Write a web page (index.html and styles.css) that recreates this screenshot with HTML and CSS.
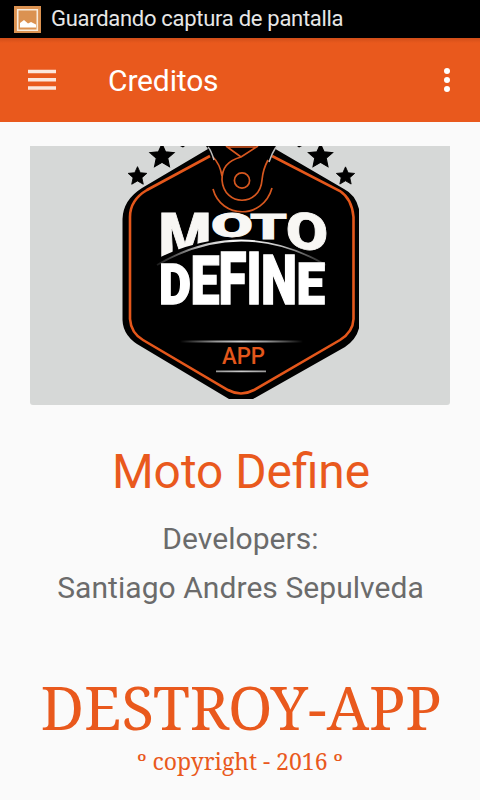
FILE: index.html
```html
<!DOCTYPE html>
<html lang="es">
<head>
<meta charset="utf-8">
<title>Creditos</title>
<link rel="stylesheet" href="styles.css">
</head>
<body>
<div class="status">
  <svg class="shot" width="27" height="27" viewBox="0 0 27 27"><path fill="#db9251" d="M0 0h27v27H0z"/><path fill="none" stroke="#f8ebdc" stroke-width="1.6" d="M3.700 3.700h19.600v20.500H3.700z"/><path fill="#fff" d="M6 21.500v-4.500l4-3 4 3.500 3-1.500 5 2.500v3z"/></svg>
  <span class="status-text">Guardando captura de pantalla</span>
</div>
<header class="bar">
  <svg class="menu" width="28" height="22" viewBox="0 0 28 22"><path stroke="#fff" stroke-opacity=".85" stroke-width="3.400" d="M0 2.500h28M0 10.700h28M0 19h28"/></svg>
  <h1 class="title">Creditos</h1>
  <svg class="more" width="6" height="24" viewBox="0 0 6 24" fill="#fff"><circle cx="3" cy="3" r="3"/><circle cx="3" cy="12" r="3"/><circle cx="3" cy="21" r="3"/></svg>
</header>
<main class="content">
  <svg class="logo" width="420" height="259" viewBox="30 146 420 259">
    <defs>
      <path id="star" d="M0-11 3.200-3.900 11-3.100 5.200 2 6.800 9.700 0 5.800-6.800 9.700-5.200 2-11-3.100-3.200-3.900z"/>
      <clipPath id="crop"><path d="M30 146h329v253H30z"/></clipPath>
      <linearGradient id="fade"><stop offset="0" stop-color="#aaa" stop-opacity="0"/><stop offset=".3" stop-color="#999"/><stop offset=".5" stop-color="#ccc"/><stop offset=".7" stop-color="#999"/><stop offset="1" stop-color="#aaa" stop-opacity="0"/></linearGradient>
      <linearGradient id="arc"><stop offset="0" stop-color="#888" stop-opacity=".2"/><stop offset=".25" stop-color="#bbb"/><stop offset=".5" stop-color="#fff"/><stop offset=".75" stop-color="#bbb"/><stop offset="1" stop-color="#888" stop-opacity=".2"/></linearGradient>
    </defs>
    <g clip-path="url(#crop)">
      <path d="M213 146 142 188Q123 200 122.500 219V320Q123 337 142 347L229 399Q241 405 253 399L345 347Q360 337 360 320V215Q358 196 344 189L272 147V146z"/>
      <path fill="none" stroke="#e4571b" stroke-width="2.600" d="M210 156 147 190Q130 200 130 217V319Q131 333 143 340L228 390Q241 397 254 390L340 340Q353 332 353.500 319V217Q352 199 340 191L272 156"/>
      <path d="M206 146h70q-6 10-6 28-5 38-28 38t-28-38q0-18-8-28z"/>
      <g fill="none" stroke="#d6571f" stroke-width="1.700">
        <path d="M227 147h30M226 146 241 157M258 146 241 157C227 161 222 168 222 180 224 207 260 207 262 180Q263 169 268 160M213 157Q220 164 222 176M213 189C221 219 263 220 272 188"/>
        <circle cx="242" cy="180.500" r="7.600"/>
      </g>
      <path fill="none" stroke="#bbb" stroke-width="1.500" d="M208 147q3 3 6 13M276 147q-4 6-7 15"/>
      <g stroke="#000" stroke-width="1">
        <use href="#star" transform="translate(162 156) scale(1.100)"/>
        <use href="#star" transform="translate(137.500 176) scale(.85)"/>
        <use href="#star" transform="translate(320.500 156) scale(1.100)"/>
        <use href="#star" transform="translate(345.500 176) scale(.83)"/>
      </g>
      <path d="M180 146h5l-2 1.500zM297 146h5l-3 1.500z"/>
    </g>
    <g class="moto">
      <text x="158.500" y="257" font-size="62" textLength="53" lengthAdjust="spacingAndGlyphs">M</text>
      <path fill="#000" d="M155 264V260Q180 246 215 240V264z"/>
      <text x="211" y="236.500" font-size="33" textLength="42" lengthAdjust="spacingAndGlyphs">O</text>
      <text x="250" y="238.500" font-size="35" textLength="37" lengthAdjust="spacingAndGlyphs">T</text>
      <text transform="matrix(1 .11 0 1 286 247)" font-size="51" textLength="42" lengthAdjust="spacingAndGlyphs">O</text>
    </g>
    <path fill="none" stroke="url(#arc)" stroke-width="1.800" d="M157 265Q241 216 326 265"/>
    <g class="define">
      <text x="159" y="304" font-size="56" textLength="32" lengthAdjust="spacingAndGlyphs">D</text>
      <text x="190.500" y="304" font-size="66" textLength="29" lengthAdjust="spacingAndGlyphs">E</text>
      <text x="218.500" y="304" font-size="72" textLength="28" lengthAdjust="spacingAndGlyphs">F</text>
      <text x="246.500" y="304" font-size="72" textLength="15" lengthAdjust="spacingAndGlyphs">I</text>
      <text x="261" y="304" font-size="69" textLength="36" lengthAdjust="spacingAndGlyphs">N</text>
      <text x="296.500" y="304" font-size="58" textLength="28.500" lengthAdjust="spacingAndGlyphs">E</text>
    </g>
    <path fill="url(#fade)" d="M180 340.500h123v2H180zM216 370.500h50.010v1.800h-50z"/>
    <text class="app" x="222" y="364" textLength="43" lengthAdjust="spacingAndGlyphs">APP</text>
  </svg>
  <h2 class="name">Moto Define</h2>
  <p class="line dev">Developers:</p>
  <p class="line author">Santiago Andres Sepulveda</p>
  <p class="brand">DESTROY-APP</p>
  <p class="copy">º copyright - 2016 º</p>
</main>
</body>
</html>
```

FILE: styles.css
```css
* { box-sizing: border-box; margin: 0; padding: 0; }
body { width: 480px; height: 800px; overflow: hidden; background: #fafafa; font-family: Roboto, sans-serif; }
.status { height: 38px; background: #000; display: flex; align-items: center; padding-left: 14px; gap: 10px; }
.status-text { color: #e6e6e6; font-size: 22px; letter-spacing: -.29px; line-height: 38px; white-space: nowrap; }
.bar { height: 84px; background: linear-gradient(#d14e19, #e9591d 5px); display: flex; align-items: center; padding: 0 30px 0 28px; }
.title { color: #fff; font-size: 30px; font-weight: 400; letter-spacing: -.15px; margin-left: 52px; flex: 1; }
.content { padding-top: 24px; display: flex; flex-direction: column; align-items: center; white-space: nowrap; }
.logo { display: block; background: #d6d8d7; border-radius: 0 0 3px 3px; }
.moto { fill: #f8f7f4; font-family: Roboto, sans-serif; font-weight: 900; }
.moto text { stroke: #f8f7f4; stroke-width: .8px; }
.define { fill: #fff; stroke: #fff; stroke-width: 1.4px; font-family: Roboto, sans-serif; font-weight: 900; }
.app { fill: #e4571b; font: 500 23px Roboto, sans-serif; }
.name { color: #e9591d; font-size: 47.800px; font-weight: 400; line-height: 56px; margin-top: 39px; padding-left: 2px; }
.line { color: #6b6b6b; font-size: 30px; line-height: 36px; letter-spacing: .06px; }
.dev { margin-top: 21px; padding-left: 1px; }
.author { margin-top: 13px; padding-left: 1px; }
.brand { color: #e9591d; font: 60px/80px "Noto Serif", "Droid Serif", "Liberation Serif", serif; margin-top: 61px; padding-left: 2px; }
.copy { color: #e9591d; font: 23px/32px "Noto Serif", "Droid Serif", "Liberation Serif", serif; margin-top: -2px; }
```
